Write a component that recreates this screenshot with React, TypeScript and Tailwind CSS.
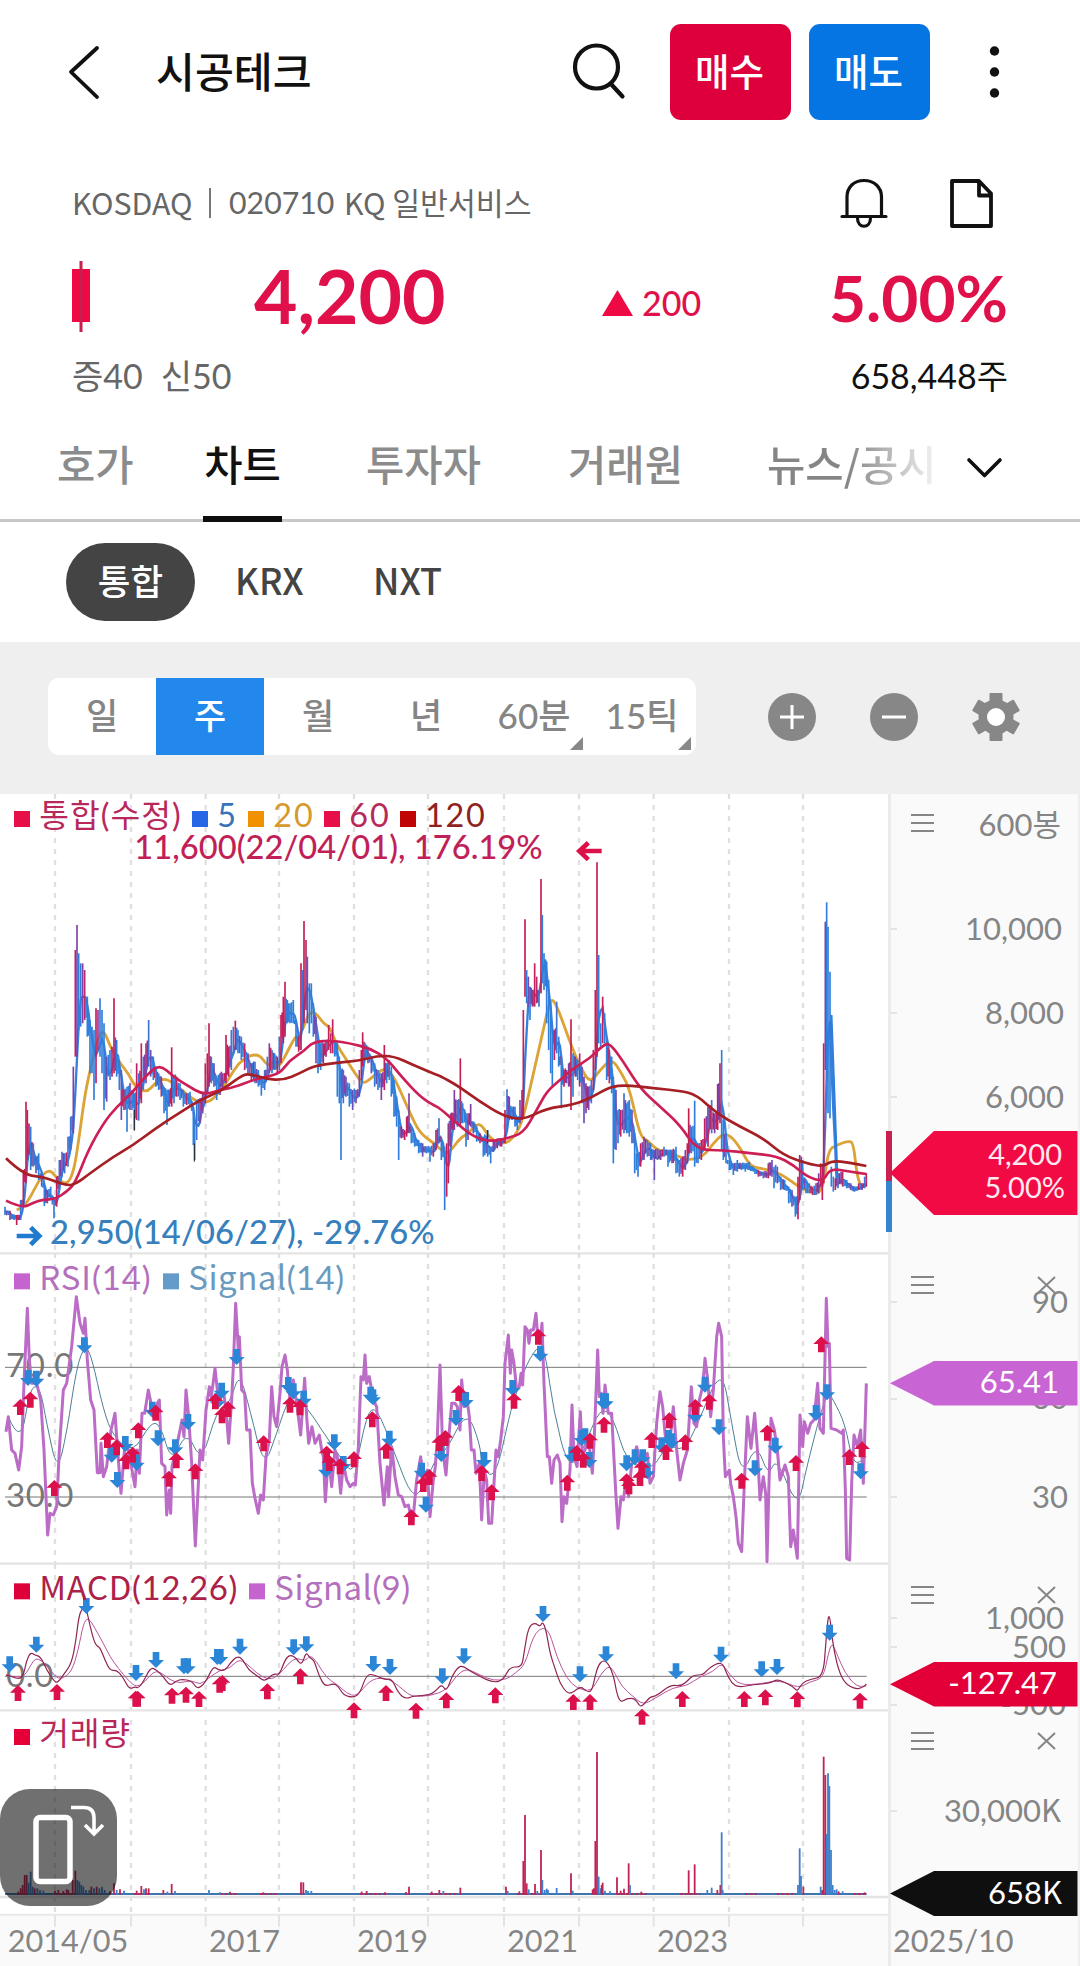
import type { ReactNode } from 'react';

type Point = [number, number];

// All chart series use a 3x grid: one unit is a third of a pixel.
const FONT_NUM = "font-[family-name:Lato,'Noto_Sans_CJK_KR',sans-serif]";
const FONT_KR = "font-[family-name:'Noto_Sans_CJK_KR',sans-serif]";

const GRID_X = [165, 393, 617, 837, 1062, 1284, 1512, 1737, 1961, 2187, 2409];
const END_X = 2600;

// x high low
const PRICE_LEFT = `15 1250 1275,30 1262 1290,50 1275 1305,62 1230 1290,70 1140 1250,78 935 1180,82 960 1110,92 1010 1140,100 1060 1130,108 1100 1150,116 1090 1170,125 1150 1190,133 1180 1248,142 1200 1240,152 1190 1225,162 1230 1285,170 1160 1250,178 1110 1200,186 1085 1160,194 1090 1150,204 1040 1130,212 980 1080,220 830 1030,226 480 800,231 405 800,236 490 720,242 520 710,248 520 700,254 540 690,262 620 740,270 690 850,276 710 850,282 720 930,288 655 880,294 660 780,300 625 800,306 660 850,312 700 960,320 800 935,330 780 870,336 770 860,342 625 850,350 750 860,358 810 900,364 840 990,372 900 960,381 890 1025,390 880 960,396 900 960,403 910 1020,410 820 990,416 850 992,424 760 940,430 800 900,438 760 880,446 690 830,452 780 860,460 800 870,468 830 890,476 850 900,484 860 920,492 890 970,501 900 1005,508 900 950,515 772 950,522 860 940,530 860 920,540 880 930,550 900 950,560 910 945,570 905 950,580 950 1065,584 990 1110,590 930 1050,600 925 1000,608 910 970,616 820 940,622 790 910,627 700 890,634 800 880,642 820 890,650 860 930,660 850 915,668 850 900,678 735 880,686 770 860,694 720 840,700 710 790,706 692 780,714 720 790,724 740 810,734 760 840,744 790 850,754 820 870,765 815 880,775 840 890,784 860 917,794 840 900,802 800 860,808 760 850,816 780 850,824 790 840,832 800 850,838 740 840,843 675 820,850 620 760,855 575 740,862 630 700,870 640 700,880 630 700,888 690 770,896 740 785,903 520 780,908 540 720,912 393 700,918 450 660,922 500 700,928 580 730,934 580 700,940 640 740,948 680 820,954 740 850,962 760 840,970 760 820,978 750 800,986 705 780,992 730 790,998 688 790,1004 750 800,1012 760 920,1018 800 940,1023 840 1110,1030 840 940,1038 860 920,1048 880 950,1058 900 960,1068 900 940,1078 840 920,1084 780 870,1088 727 830,1096 760 810,1104 770 820,1114 800 850,1124 820 890,1134 840 900,1144 850 930,1153 765 900,1160 820 880,1168 810 870,1174 830 920,1182 870 980,1190 920 1010,1196 960 1110,1204 1010 1045,1214 1020 1050,1220 980 1040,1227 910 1030,1234 1010 1060,1244 1030 1070,1256 1050 1090,1268 1060 1100,1280 1070 1090,1290 1070 1115,1300 1060 1100,1308 1020 1080,1317 985 1060,1324 1040 1110,1334 1070 1260,1340 1060 1220`;
const PRICE_RIGHT = `25 1000 1180,32 970 1070,43 900 1020,52 930 1010,61 805 1010,68 940 1000,78 970 1070,84 970 1050,92 942 1010,100 1000 1030,110 1010 1055,120 1030 1060,130 1040 1100,143 1020 1100,152 1070 1120,160 1050 1085,172 1045 1075,185 1045 1070,195 960 1060,201 898 1020,208 920 990,216 950 990,225 950 1010,232 980 1020,240 930 1000,246 900 990,250 660 980,255 388 620,260 540 640,265 560 650,270 590 690,277 600 650,284 520 650,290 560 640,297 600 650,303 267 610,307 375 580,312 490 600,320 515 700,326 570 780,332 640 850,337 720 890,343 720 810,350 635 790,356 740 830,364 800 955,372 840 890,380 840 880,386 820 890,393 688 960,399 790 920,406 800 860,413 810 870,419 790 890,426 830 940,432 860 1000,438 880 970,446 890 960,454 870 940,460 780 900,466 600 840,471 217 800,476 495 760,482 700 770,488 620 760,494 670 760,500 740 870,508 780 880,515 800 910,520 860 1120,528 900 1080,534 960 1060,542 960 1040,552 910 1030,560 940 1030,568 930 1040,576 960 1060,584 1030 1150,594 1090 1160,602 1060 1130,612 1040 1110,622 1050 1100,632 1060 1110,643 1080 1170,652 1075 1110,662 1080 1110,672 1070 1100,684 1080 1130,696 1080 1120,708 1070 1150,718 1110 1160,728 1100 1160,736 1080 1140,742 1060 1120,746 955 1090,754 1010 1090,764 932 1130,774 1060 1120,784 1050 1110,794 985 1080,804 950 1070,815 930 1030,824 970 1030,833 882 1020,840 820 1000,845 780 1080,850 990 1110,858 1040 1120,868 1110 1140,880 1120 1155,892 1110 1145,904 1120 1140,916 1120 1145,928 1115 1140,940 1130 1145,955 1140 1160,970 1145 1165,985 1120 1165,996 1110 1160,1002 1130 1195,1012 1130 1180,1022 1160 1200,1034 1170 1200,1046 1190 1240,1056 1200 1250,1066 1220 1280,1074 1160 1288,1079 1095 1230,1088 1110 1200,1098 1170 1210,1108 1180 1210,1118 1190 1215,1128 1180 1215,1136 1150 1210,1142 1120 1190,1147 1130 1230,1151 760 1180,1156 395 840,1160 337 860,1164 410 970,1170 545 985,1174 1130 1190,1180 1160 1205,1186 1165 1200,1194 1150 1195,1208 1145 1190,1220 1170 1195,1232 1180 1200,1244 1190 1205,1256 1180 1200,1266 1180 1200,1274 1160 1195,1279 1150 1190`;

const MA20_LEFT = `50,1260 75,1250 110,1185 130,1150 152,1140 170,1165 200,1185 220,1150 235,1060 255,910 275,820 295,740 312,720 330,770 360,820 385,850 405,890 440,908 465,880 490,865 515,875 545,900 575,925 600,938 630,935 660,905 690,860 715,820 750,795 780,795 800,825 835,835 860,790 885,740 905,730 925,670 945,665 970,700 990,712 1010,765 1040,810 1065,850 1088,882 1110,868 1130,850 1155,835 1175,850 1200,900 1230,970 1260,1030 1300,1058 1335,1090`;
const MA20_RIGHT = `30,1085 60,1045 85,1030 110,1003 125,1005 150,1045 190,1065 225,1040 250,985 280,850 310,720 330,628 345,635 370,700 395,770 420,830 450,880 480,840 515,805 545,850 570,900 600,1040 625,1052 650,1080 700,1090 740,1112 790,1100 820,1060 850,1030 875,1040 905,1080 930,1130 980,1138 1030,1155 1075,1190 1110,1205 1130,1215 1150,1190 1165,1080 1190,1065 1225,1053 1240,1058 1250,1150 1262,1190 1279,1185`;
const MA60_LEFT = `18,1232 65,1255 100,1238 130,1228 165,1228 200,1205 225,1180 265,1080 310,1000 350,950 400,905 435,860 478,822 520,860 560,885 610,915 660,900 700,892 760,870 800,860 840,850 870,810 910,785 940,755 1000,752 1050,760 1110,775 1160,805 1200,855 1260,920 1300,945`;
const MA60_RIGHT = `0,955 50,1000 100,1040 150,1055 200,1045 250,1030 290,960 320,905 360,870 400,835 450,805 490,765 510,760 550,815 600,895 660,950 720,1005 770,1080 850,1080 930,1090 1010,1098 1060,1125 1100,1160 1150,1175 1170,1135 1230,1145 1279,1152`;
const MA120_LEFT = `18,1105 70,1155 130,1160 200,1188 230,1180 270,1150 340,1100 400,1065 460,1020 520,980 600,930 660,905 720,860 745,850 800,868 850,870 900,850 940,828 1010,818 1080,812 1130,798 1180,798 1240,825 1300,851`;
const MA120_RIGHT = `0,858 50,885 120,935 190,978 250,990 320,955 400,945 460,920 510,890 560,885 640,895 720,902 770,915 830,970 900,1010 970,1045 1030,1095 1100,1120 1150,1130 1175,1112 1230,1118 1279,1128`;

const RSI_LEFT = `18,545 25,500 35,600 45,610 56,660 65,590 72,400 82,175 88,330 95,400 110,400 122,450 132,600 143,855 150,790 160,795 170,770 178,600 190,420 200,400 215,290 229,140 240,220 250,250 255,205 262,330 272,450 282,480 292,668 300,668 303,580 310,680 320,650 333,540 345,490 352,590 363,730 375,580 385,600 405,710 412,600 418,670 426,490 434,490 445,420 455,470 465,500 472,460 478,450 485,640 495,650 500,795 508,720 512,790 516,650 530,590 540,540 546,510 552,560 558,420 566,500 575,640 586,888 600,600 608,630 618,480 628,410 634,440 645,355 652,420 660,450 670,420 678,480 686,580 695,450 700,350 707,160 715,300 718,260 725,420 734,430 740,540 750,540 757,700 765,745 775,790 782,735 790,750 798,620 808,570 815,410 822,500 830,530 840,430 846,350 855,315 862,360 870,450 880,390 890,460 902,555 914,385 920,500 926,580 936,530 945,580 958,555 965,600 970,620 976,755 985,620 995,710 1005,600 1012,620 1022,730 1030,640 1040,690 1050,710 1060,700 1066,705 1075,590 1083,380 1090,390 1095,315 1100,400 1108,380 1120,450 1130,470 1140,640 1152,765 1162,650 1166,740 1175,590 1185,680 1195,735 1205,740 1215,770 1225,765 1238,820 1250,690 1262,620 1272,700 1282,660 1290,800 1300,690 1306,650 1312,560 1320,345 1328,600 1338,675`;
const RSI_RIGHT = `25,580 35,460 45,460 52,470 60,540 65,390 72,470 80,440 88,500 94,600 102,600 108,670 118,640 125,810 133,660 140,690 146,820 155,820 162,700 168,600 175,620 182,570 190,500 195,340 205,255 211,370 215,300 222,340 230,420 238,410 243,370 248,405 255,230 262,240 267,280 272,240 280,240 288,190 293,260 300,280 306,220 312,400 322,620 328,620 335,700 342,630 352,615 360,640 366,815 372,740 380,760 390,660 396,465 402,620 411,650 421,485 427,620 435,600 445,560 457,670 463,560 473,300 478,440 484,430 489,490 495,405 505,490 515,490 520,590 528,740 534,835 543,740 550,750 560,680 566,740 575,640 590,590 600,640 612,620 622,610 630,700 640,680 650,520 660,425 668,470 676,560 690,570 700,470 710,600 720,690 730,640 742,600 754,410 762,520 770,530 778,450 788,410 795,325 802,380 812,500 820,420 830,260 836,220 845,260 850,560 856,680 868,660 872,700 880,740 888,800 895,880 905,905 913,700 922,500 933,595 944,490 953,610 960,750 970,680 977,730 981,935 987,700 993,505 1003,540 1012,600 1020,690 1035,645 1045,680 1052,890 1060,840 1072,925 1080,495 1088,590 1093,515 1103,550 1112,520 1122,510 1133,400 1140,535 1150,550 1159,145 1164,290 1168,280 1173,535 1190,540 1205,550 1210,540 1216,720 1220,925 1229,930 1235,700 1242,555 1252,590 1262,540 1270,700 1279,400`;
const RSI_SIGNAL_LEFT = `25,500 62,590 90,410 120,410 140,520 172,668 200,550 230,350 255,285 275,320 310,480 340,560 400,610 450,520 480,520 515,640 560,540 605,640 650,480 690,460 718,365 750,480 792,655 830,550 870,430 920,470 965,540 1020,620 1063,680 1100,490 1130,470 1180,600 1240,755 1280,690 1310,620`;
const RSI_SIGNAL_RIGHT = `20,600 80,480 120,580 125,650 165,690 210,490 225,440 260,340 300,280 318,320 340,480 385,660 430,600 480,470 520,500 560,640 640,660 680,580 730,605 770,530 845,345 875,520 905,680 950,580 985,680 1010,620 1073,780 1100,650 1160,420 1180,450 1215,520 1240,650 1279,620`;

const MACD_LEFT = `18,345 35,350 60,358 72,340 80,300 92,277 105,285 122,290 140,330 160,360 172,370 190,345 215,310 228,240 235,180 243,150 258,140 268,190 285,255 300,262 315,300 330,332 350,330 368,350 388,388 405,380 415,385 430,365 452,322 470,330 490,350 510,378 530,362 545,358 575,362 592,388 615,370 640,318 655,330 675,332 690,310 712,287 730,300 745,330 775,350 795,365 820,340 838,345 855,300 868,285 885,290 905,318 918,275 930,295 942,300 958,350 975,380 1000,370 1015,378 1030,405 1060,413 1080,400 1100,342 1125,345 1155,360 1175,355 1195,400 1218,417 1240,408 1290,405 1310,390 1325,373 1340,395`;
const MACD_RIGHT = `35,350 55,320 70,318 85,330 120,350 160,368 190,360 210,320 245,322 252,280 265,200 285,188 300,200 308,185 318,210 330,280 345,325 360,370 380,398 395,400 422,378 440,395 455,395 465,350 475,315 490,300 505,310 522,350 530,400 542,428 560,415 585,415 600,440 610,435 630,410 650,408 690,375 725,378 745,360 760,345 790,345 805,325 845,303 860,340 875,370 895,382 940,374 990,370 1010,358 1030,365 1060,380 1072,395 1085,370 1110,358 1150,350 1158,240 1167,145 1178,250 1195,330 1215,370 1245,388 1270,382 1279,372`;
const MACD_SIGNAL_LEFT = `18,345 60,355 80,340 100,300 115,295 140,315 165,350 185,358 215,335 235,270 250,190 265,172 285,205 310,250 330,290 355,325 385,362 410,382 435,365 460,335 480,335 510,360 540,370 575,360 600,375 625,355 660,330 690,325 715,298 740,310 770,340 805,360 835,348 865,310 890,292 915,305 930,285 950,305 980,355 1010,372 1040,400 1070,410 1110,360 1150,352 1180,365 1210,390 1235,410 1290,408 1340,390`;
const MACD_SIGNAL_RIGHT = `50,345 80,325 120,345 160,362 200,358 225,340 255,315 280,225 310,200 330,220 350,290 380,355 410,385 455,395 480,345 505,318 520,330 545,380 580,410 610,435 650,412 700,382 740,378 780,350 820,335 845,308 870,345 900,375 960,372 1020,360 1075,385 1110,365 1150,355 1165,280 1176,248 1190,280 1215,340 1250,380 1279,378`;

const RSI_DOWN = `84,360 109,362 253,262 335,590 352,666 376,558 410,614 474,541 457,455 526,568 564,492 652,430 665,398 710,297 865,381 880,400 911,422 978,635 1003,553 1030,618 1112,410 1119,418 1168,542 1265,638 1278,740 1324,588 1368,480 1397,426 1452,606 1538,390 1621,287 1715,590 1745,540 1755,535 1768,606 1810,430 1817,430 1880,616 1905,598 1928,598 1942,640 1985,562 2005,540 2015,550 2085,470 2115,380 2157,508 2265,631 2326,563 2448,465 2481,403 2582,640`;
const RSI_UP = `61,447 91,425 163,690 322,546 350,568 378,610 398,590 415,517 467,464 507,662 529,607 586,640 646,430 666,472 684,453 791,556 870,440 900,448 980,587 988,615 1020,625 1062,604 1117,484 1159,578 1234,778 1270,678 1288,657 1318,555 1336,540 1376,405 1445,645 1475,703 1542,428 1615,236 1702,674 1730,585 1750,605 1770,548 1812,500 1880,670 1887,685 1920,660 1925,630 1955,546 2008,487 1998,582 2056,553 2086,447 2128,431 2225,668 2302,524 2388,615 2464,259 2548,597 2586,574`;
const MACD_DOWN = `29,289 109,230 259,114 408,315 468,276 552,295 563,295 652,267 661,267 720,236 881,238 919,229 1120,288 1170,297 1327,325 1392,265 1629,138 1740,319 1818,259 2028,310 2163,260 2285,304 2331,297 2489,194`;
const MACD_UP = `54,375 171,372 407,392 413,392 516,383 558,380 597,393 659,350 667,345 802,370 901,325 1062,427 1158,375 1248,428 1339,397 1486,382 1720,402 1770,402 1926,446 2047,393 2233,393 2296,388 2392,394 2580,398`;

// x top, r = rising week, b = falling week
const VOLUME = `55 995 r,62 985 r,68 975 r,74 945 r,80 945 r,86 968 b,92 935 b,98 980 b,104 985 r,112 985 b,120 990 b,130 992 b,165 992 r,175 990 r,190 993 r,200 988 r,205 990 r,218 960 r,226 932 r,232 960 b,238 965 b,244 975 b,250 980 b,258 990 b,268 990 b,274 980 r,282 985 b,290 980 r,298 985 b,306 980 b,314 990 b,330 993 r,342 970 r,350 990 b,360 988 r,372 992 b,410 992 r,424 978 r,432 988 b,438 985 r,446 985 r,490 990 r,502 995 b,515 972 r,525 993 b,627 990 b,660 997 b,690 995 r,790 997 r,903 967 r,910 967 r,918 990 b,924 993 b,934 993 b,1085 995 r,1100 993 r,1155 997 r,1218 996 r,1227 980 r,1295 995 r,1318 990 r,1330 993 b,1381 983 r,1518 980 r,1523 993 b,1558 994 r,1570 903 r,1575 765 r,1580 970 r,1586 988 b,1605 972 r,1612 993 b,1623 870 r,1627 960 b,1634 990 b,1640 986 b,1644 990 b,1670 984 b,1713 940 r,1718 992 b,1778 988 r,1782 985 r,1786 843 r,1791 576 r,1796 950 b,1802 985 b,1805 975 r,1808 968 r,1815 992 b,1830 994 b,1851 952 r,1862 992 r,1872 986 r,1886 910 r,1890 975 b,1924 995 r,2066 931 r,2084 913 r,2122 990 b,2135 983 b,2152 990 r,2161 975 r,2165 817 b,2168 990 b,2394 975 b,2399 865 b,2403 948 b,2410 980 r,2462 980 b,2467 990 r,2471 590 r,2476 645 r,2480 822 b,2484 640 b,2488 678 b,2493 870 b,2498 975 b,2504 990 b,2510 988 b,2516 994 r,2528 994 b,2594 997 r`;

const parse = (s: string, dx = 0): Point[] =>
  s.split(' ').map((p) => {
    const [x, y] = p.split(',').map(Number);
    return [x + dx, y];
  });

const join = (left: string, right: string) => [...parse(left), ...parse(right, 1320)];

const toLine = (pts: Point[]) => 'M' + pts.map((p) => p.join(' ')).join('L');

// smooth line through the midpoints of the segments
const toCurve = (pts: Point[]) => {
  let d = `M${pts[0][0]} ${pts[0][1]}`;
  for (let i = 1; i < pts.length - 1; i++) {
    const [x, y] = pts[i];
    const [nx, ny] = pts[i + 1];
    d += `Q${x} ${y} ${(x + nx) / 2} ${(y + ny) / 2}`;
  }
  const last = pts[pts.length - 1];
  return `${d}L${last[0]} ${last[1]}`;
};

const noise = (n: number) => {
  const v = Math.sin(n * 12.9898) * 43758.5453;
  return v - Math.floor(v);
};

interface Bar {
  x: number;
  high: number;
  low: number;
  color: string;
}

function buildBars(): Bar[] {
  const rows = [
    ...PRICE_LEFT.split(',').map((r) => r.split(' ').map(Number)),
    ...PRICE_RIGHT.split(',').map((r) => {
      const [x, h, l] = r.split(' ').map(Number);
      return [x + 1320, h, l];
    }),
  ];
  const bars: Bar[] = [];
  rows.forEach(([x, high, low], i) => {
    const next = rows[i + 1] ?? rows[i];
    const prev = rows[i - 1] ?? rows[i];
    const rising = next[1] + next[2] + high + low < 2 * (prev[1] + prev[2]);
    // a lone spike above both neighbours is a rising week
    const spike = prev[1] - high > 90 && next[1] - high > 40;
    const pick = (n: number) => {
      const k = noise(n);
      if (rising) return k < 0.5 ? '#c41e5c' : k < 0.8 ? '#8140a6' : '#3f72d2';
      return k < 0.7 ? '#2f7edb' : k < 0.88 ? '#6a4fb8' : '#b92a68';
    };
    bars.push({ x, high, low, color: spike ? '#c41e4f' : pick(x) });
    const gap = next[0] - x;
    const count = Math.round(gap / 4.3) - 1;
    for (let k = 1; k <= count; k++) {
      const top = Math.max(high, next[1]);
      const bottom = Math.min(low, next[2]);
      const size = Math.max(bottom - top, 14);
      const bx = x + (gap * k) / (count + 1);
      bars.push({
        x: bx,
        high: top - noise(bx + 3) * size * 0.12,
        low: top + size - noise(bx + 7) * size * 0.2,
        color: pick(bx),
      });
    }
  });
  return bars;
}

const BARS = buildBars();
const MA5: Point[] = BARS.map((b, i) => {
  const part = BARS.slice(Math.max(0, i - 3), i + 1);
  const sum = part.reduce((a, p) => a + p.high * 0.45 + p.low * 0.55, 0);
  return [b.x, sum / part.length];
});

function Mixed({ text }: { text: string }) {
  return (
    <>
      {text.split(/([A-Za-z가-힣]+)/).map((part, i) =>
        /[A-Za-z가-힣]/.test(part) ? (
          <tspan key={i} className={FONT_KR}>{part}</tspan>
        ) : (
          part
        ),
      )}
    </>
  );
}

function Grid({ top, bottom }: { top: number; bottom: number }) {
  return (
    <g stroke="#e0e0e0" strokeWidth="7" strokeDasharray="15 18">
      {GRID_X.map((x) => (
        <line key={x} x1={x} x2={x} y1={top} y2={bottom} />
      ))}
    </g>
  );
}

function Markers({ points, up }: { points: string; up?: boolean }) {
  return (
    <g fill={up ? '#dc114b' : '#2c86d8'}>
      {parse(points).map(([x, y], i) => (
        <path
          key={i}
          transform={`translate(${x} ${y})`}
          d={up ? 'M0 0L24 23H10V48H-10V23H-24Z' : 'M0 48L24 24H10V0H-10V24H-24Z'}
        />
      ))}
    </g>
  );
}

interface LegendItem {
  x: number;
  text: string;
  color: string;
  textColor: string;
  width: number;
}

function Legend({ items, y, size }: { items: LegendItem[]; y: number; size: number }) {
  return (
    <g>
      {items.map((it) => (
        <g key={it.text}>
          <rect x={it.x} y={y - 48} width="48" height="48" fill={it.color} />
          <text x={it.x + 76} y={y + 1} fontSize={size} fill={it.textColor} textLength={it.width} className={FONT_NUM}>
            <Mixed text={it.text} />
          </text>
        </g>
      ))}
    </g>
  );
}

function Pane({ top, height, className, children }: { top: number; height: number; className: string; children: ReactNode }) {
  return (
    <svg viewBox={`0 ${top} 2664 ${height}`} className={`block w-full overflow-visible ${className}`}>
      {children}
    </svg>
  );
}

function PricePane() {
  return (
    <Pane top={12} height={1377} className="h-[459px]">
      <Grid top={12} bottom={1389} />
      <line x1="0" x2="2664" y1="1390" y2="1390" stroke="#e4e4e4" strokeWidth="7" />
      <path d={toCurve(join(MA20_LEFT, MA20_RIGHT))} fill="none" stroke="#dca336" strokeWidth="8.5" />
      <path d={toLine(MA5)} fill="none" stroke="#3580de" strokeWidth="7" />
      {BARS.map((b, i) => (
        <line key={i} x1={b.x} x2={b.x} y1={b.high} y2={b.low} stroke={b.color} strokeWidth="5" />
      ))}
      <path d="M2494 675L2512 1165" stroke="#2f7edb" strokeWidth="7" />
      <path d="M403 960V1022M583 1060V1115M1463 1020V1060" stroke="#222" strokeWidth="3" />
      <path d={toCurve(join(MA60_LEFT, MA60_RIGHT))} fill="none" stroke="#cd1f56" strokeWidth="8" />
      <path d={toCurve(join(MA120_LEFT, MA120_RIGHT))} fill="none" stroke="#a51f24" strokeWidth="8" />
      <Legend
        y={111}
        size={97}
        items={[
          { x: 42, text: '통합(수정)', color: '#e60f47', textColor: '#b8285a', width: 424 },
          { x: 576, text: '5', color: '#2767e6', textColor: '#3673b8', width: 56 },
          { x: 744, text: '20', color: '#f29100', textColor: '#d69a2c', width: 118 },
          { x: 972, text: '60', color: '#e60f47', textColor: '#b8285a', width: 118 },
          { x: 1200, text: '120', color: '#c00505', textColor: '#8f2220', width: 178 },
        ]}
      />
      <g className={`font-medium ${FONT_NUM}`} fontSize="98">
        <text x="403" y="207" fill="#c11f58" textLength="1225">11,600(22/04/01), 176.19%</text>
        <text x="150" y="1361" fill="#3580bd" textLength="1154">2,950(14/06/27), -29.76%</text>
      </g>
      <path d="M1805 183H1738M1765 158L1738 183L1765 209" fill="none" stroke="#dc1149" strokeWidth="14" />
      <path d="M50 1338H117M92 1312L118 1338L92 1364" fill="none" stroke="#207bd0" strokeWidth="14" />
    </Pane>
  );
}

function RsiPane() {
  return (
    <Pane top={9} height={933} className="h-[311px]">
      <Grid top={9} bottom={942} />
      <line x1="0" x2="2664" y1="941" y2="941" stroke="#e4e4e4" strokeWidth="7" />
      <g fontSize="99" fill="#777" className={FONT_NUM}>
        <text x="18" y="382" textLength="202">70.0</text>
        <text x="18" y="772" textLength="202">30.0</text>
      </g>
      <path d={`M15 352H${END_X}M15 741H${END_X}`} stroke="#777" strokeWidth="3" />
      <path d={toCurve(join(RSI_SIGNAL_LEFT, RSI_SIGNAL_RIGHT))} fill="none" stroke="#4d8097" strokeWidth="3" />
      <path d={toLine(join(RSI_LEFT, RSI_RIGHT))} fill="none" stroke="#bb6cc6" strokeWidth="9" strokeLinejoin="round" />
      <Markers points={RSI_DOWN} />
      <Markers points={RSI_UP} up />
      <Legend
        y={118}
        size={99}
        items={[
          { x: 42, text: 'RSI(14)', color: '#c564cf', textColor: '#b46fbd', width: 334 },
          { x: 489, text: 'Signal(14)', color: '#659bcb', textColor: '#6a9bbf', width: 467 },
        ]}
      />
    </Pane>
  );
}

function MacdPane() {
  return (
    <Pane top={12} height={438} className="h-[146px]">
      <Grid top={12} bottom={450} />
      <line x1="0" x2="2664" y1="451" y2="451" stroke="#e4e4e4" strokeWidth="7" />
      <text x="18" y="380" fontSize="99" fill="#777" textLength="142" className={FONT_NUM}>0.0</text>
      <path d={`M15 349H${END_X}`} stroke="#777" strokeWidth="3" />
      <path d={toCurve(join(MACD_SIGNAL_LEFT, MACD_SIGNAL_RIGHT))} fill="none" stroke="#b8559f" strokeWidth="3" />
      <path d={toCurve(join(MACD_LEFT, MACD_RIGHT))} fill="none" stroke="#8f2450" strokeWidth="3.6" />
      <Markers points={MACD_DOWN} />
      <Markers points={MACD_UP} up />
      <Legend
        y={118}
        size={99}
        items={[
          { x: 42, text: 'MACD(12,26)', color: '#de0038', textColor: '#ac2148', width: 594 },
          { x: 747, text: 'Signal(9)', color: '#c564cf', textColor: '#b46fbd', width: 407 },
        ]}
      />
    </Pane>
  );
}

function VolumePane() {
  return (
    <Pane top={450} height={615} className="h-[205px]">
      <Grid top={480} bottom={1065} />
      <line x1="0" x2="2664" y1="1011" y2="1011" stroke="#e4e4e4" strokeWidth="7" />
      <line x1="0" x2="2664" y1="1064" y2="1064" stroke="#e8e8e8" strokeWidth="6" />
      <path d="M15 1002H2600" stroke="#3e75ae" strokeWidth="6" />
      <path d="M165 1002H220M400 1002H450M660 1002H710M780 1002H830M1080 1002H1165M1290 1002H1370M1550 1002H1620M1850 1002H1940M2040 1002H2100M2235 1002H2270M2330 1002H2380M2560 1002H2600" stroke="#a8305f" strokeWidth="6" strokeDasharray="9 5" />
      {VOLUME.split(',').map((row) => {
        const [x, top, kind] = row.split(' ');
        return <path key={x} d={`M${x} ${top}V1004`} stroke={kind === 'r' ? '#c02354' : '#3c7fcb'} strokeWidth="5.4" />;
      })}
      <Legend y={555} size={97} items={[{ x: 42, text: '거래량', color: '#e60038', textColor: '#b8285a', width: 272 }]} />
    </Pane>
  );
}

function TimeAxis() {
  const labels: [number, string][] = [[23, '2014/05'], [627, '2017'], [1071, '2019'], [1521, '2021'], [1971, '2023']];
  return (
    <svg viewBox="0 1065 2664 153" className="block h-[51px] w-full bg-[#fafafa]">
      <path d={GRID_X.map((x) => `M${x} 1065V1100`).join('')} stroke="#e4e4e4" strokeWidth="6" />
      <g fontSize="92" fill="#858585" className={FONT_NUM}>
        {labels.map(([x, t]) => (
          <text key={t} x={x} y="1176">{t}</text>
        ))}
      </g>
    </svg>
  );
}

function Tag({ top, height, color }: { top: number; height: number; color: string }) {
  return <path d={`M890 ${top + height / 2}L934 ${top}H1077.5V${top + height}H934Z`} fill={color} />;
}

// value scale on the right, in page pixels
function ValueAxis() {
  const scale: [number, number, string][] = [
    [1061, 929, '10,000'],
    [1063, 1013, '8,000'],
    [1063, 1097, '6,000'],
    [1067, 1302, '90'],
    [1067, 1398, '60'],
    [1067, 1497, '30'],
    [1063, 1618, '1,000'],
    [1065, 1647, '500'],
    [1065, 1703.5, '-500'],
  ];
  return (
    <svg viewBox="888 794 192 1172" className={`block h-[1172px] w-[192px] shrink-0 overflow-visible bg-[#fafafa] ${FONT_NUM}`}>
      <path d="M889.5 794V1966" stroke="#ebebeb" strokeWidth="3" />
      <path d="M1079 794V1966" stroke="#efefef" strokeWidth="2" />
      <path d="M891 929H897M891 1013H897M891 1097H897M891 1302H897M891 1399H897M891 1497H897M891 1618H897M891 1647H897M891 1705H897M891 1811H897" stroke="#e4e4e4" strokeWidth="2" />
      {[823, 1285, 1595, 1741].map((y) => (
        <path key={y} d={`M911 ${y - 8}H934M911 ${y}H934M911 ${y + 8}H934`} stroke="#858585" strokeWidth="2" />
      ))}
      {[1285, 1595, 1741].map((y) => (
        <path key={y} d={`M1038 ${y - 8}L1055 ${y + 8}M1055 ${y - 8}L1038 ${y + 8}`} stroke="#858585" strokeWidth="2" />
      ))}
      <g fontSize="31" fill="#858585" textAnchor="end">
        {scale.map(([x, y, t]) => (
          <text key={t} x={x + 1} y={y + 11}>{t}</text>
        ))}
        <text x="1061" y="836">600봉</text>
        <text x="1061" y="1822"><Mixed text="30,000K" /></text>
      </g>
      <text x="893" y="1952" fontSize="30.7" fill="#858585">2025/10</text>
      <rect x="886" y="1131" width="6" height="50" fill="#c9204f" />
      <rect x="886" y="1181" width="6" height="51" fill="#3585cf" />
      <Tag top={1131} height={84} color="#f20a45" />
      <Tag top={1361} height={44.5} color="#c964d4" />
      <Tag top={1662} height={44.5} color="#e30039" />
      <Tag top={1871} height={45} color="#0f0f0f" />
      <g fontSize="29" fill="#ffe9f0" textAnchor="end">
        <text x="1062" y="1165">4,200</text>
        <text x="1065" y="1198">5.00%</text>
      </g>
      <g fontSize="31" fill="#fff" textAnchor="end">
        <text x="1059" y="1393">65.41</text>
        <text x="1057" y="1694">-127.47</text>
        <text x="1062" y="1904"><Mixed text="658K" /></text>
      </g>
    </svg>
  );
}

function RotateButton() {
  return (
    <button className="absolute left-0 top-[995px] h-[117px] w-[117px] rounded-[30px] bg-[#111]/60">
      <svg viewBox="0 0 117 117" className="h-full w-full" fill="none" stroke="#fff">
        <rect x="36" y="28.5" width="34" height="64" rx="4" strokeWidth="5.5" />
        <path d="M71 18.5H84Q94 18.5 94 29V44M85 36L94 45L103 36" strokeWidth="3.6" />
      </svg>
    </button>
  );
}

function Header() {
  return (
    <header className="flex h-[144px] items-center pl-[66px]">
      <svg viewBox="0 0 36 56" className="h-[56px] w-[36px]" fill="none" stroke="#111" strokeWidth="3.8" strokeLinecap="round" strokeLinejoin="round">
        <path d="M31 4L5 28L31 53" />
      </svg>
      <h1 className="ml-[54px] w-[412px] pb-[4px] text-[42.3px] font-medium leading-none text-[#111]">시공테크</h1>
      <svg viewBox="0 0 60 60" className="h-[60px] w-[60px]" fill="none" stroke="#111" strokeWidth="4.2" strokeLinecap="round">
        <circle cx="28.5" cy="25" r="21.5" />
        <path d="M43 42L54.500 54.500" />
      </svg>
      <button className="ml-[42px] h-[96px] w-[121px] rounded-[11px] bg-[#de003d] pb-[4px] pr-[2px] text-[37.5px] font-medium text-white">매수</button>
      <button className="ml-[18px] h-[96px] w-[121px] rounded-[11px] bg-[#0575e3] pb-[4px] pr-[2px] text-[37.5px] font-medium text-white">매도</button>
      <svg viewBox="0 0 12 56" className="ml-[58px] h-[56px] w-[12px]" fill="#111">
        <circle cx="6.500" cy="7" r="4.700" />
        <circle cx="6.500" cy="28" r="4.700" />
        <circle cx="6.500" cy="49" r="4.700" />
      </svg>
    </header>
  );
}

function Quote() {
  return (
    <section>
      <div className="flex h-[100px] items-center pl-[72px] pt-[19px] text-[30.3px] leading-none text-[#666]">
        <span className="w-[119px] pb-[2px]">KOSDAQ</span>
        <span className="mx-[18px] mb-[2px] h-[30px] w-[2px] bg-[#777]" />
        <span className={`w-[107px] pb-[2px] ${FONT_NUM}`}>020710</span>
        <span className="ml-[8px] w-[500px] pb-[2px]">KQ 일반서비스</span>
        <svg viewBox="0 0 50 54" className="-ml-[5px] h-[54px] w-[50px]" fill="none" stroke="#111" strokeWidth="3.2" strokeLinecap="round">
          <path d="M8 39V20C8 10 15 3.500 25 3.500S42.500 10 42.500 20V39M3 39.500H47M18.500 41C18.500 52 31.500 52 31.500 41" />
        </svg>
        <svg viewBox="0 0 50 54" className="ml-[57px] h-[54px] w-[50px]" fill="none" stroke="#111" strokeWidth="3.8" strokeLinejoin="round">
          <path d="M6 4H33L45 16.500V49H6ZM33 4V18.500H45" />
        </svg>
      </div>
      <div className={`flex h-[104px] items-center pl-[72px] text-[#e0114a] ${FONT_NUM}`}>
        <svg viewBox="0 0 18 71" className="h-[71px] w-[18px]">
          <rect x="0" y="8" width="18" height="53" fill="#ee0844" />
          <rect x="7.500" y="0" width="3" height="71" fill="#c5204e" />
        </svg>
        <span className="ml-[164px] w-[348px] pb-[2px] text-[75px] font-bold leading-none">4,200</span>
        <svg viewBox="0 0 31 26" className="mt-[14px] h-[26px] w-[31px]">
          <path d="M15.500 0L31 26H0Z" fill="#ee0844" />
        </svg>
        <span className="ml-[9px] mt-[14px] w-[187px] text-[34px] font-medium leading-none">200</span>
        <span className="mt-[4px] text-[64px] font-bold leading-none">5.00%</span>
      </div>
      <div className={`flex h-[62px] items-center justify-between pl-[72px] pr-[72px] pb-[6px] text-[34px] leading-none ${FONT_NUM}`}>
        <span className="flex gap-[18px] text-[#666]">
          <span>증40</span>
          <span>신50</span>
        </span>
        <span className="text-[#111]">658,448주</span>
      </div>
    </section>
  );
}

function Tabs() {
  return (
    <nav className="flex h-[112px] border-b-[3px] border-[#c8c8c8] pl-[57px] text-[41.7px] font-medium leading-[107px] text-[#8b8b8b]">
      <span className="h-[112px] w-[146px]">호가</span>
      <span className="h-[112px] w-[79px] border-b-[6px] border-[#0d0d0d] text-center text-[#111]">차트</span>
      <span className="ml-[84px] w-[202px]">투자자</span>
      <span className="w-[199px]">거래원</span>
      <span className="w-[177px] whitespace-nowrap bg-gradient-to-r from-[#858585] from-45% to-[#f2f2f2] to-95% bg-clip-text text-transparent">뉴스/공시</span>
      <svg viewBox="0 0 40 24" className="ml-[20px] mt-[46px] h-[24px] w-[40px]" fill="none" stroke="#111" strokeWidth="3.600" strokeLinecap="round" strokeLinejoin="round">
        <path d="M5 4L20.500 19.500L36 4" />
      </svg>
    </nav>
  );
}

function Markets() {
  return (
    <div className="flex h-[120px] items-center pl-[66px] text-[36px] font-medium leading-none text-[#444]">
      <span className="flex h-[78px] w-[129px] items-center justify-center rounded-full bg-[#444] pb-[5px] text-[35.500px] text-white">통합</span>
      <span className="ml-[40px] w-[138px] pb-[6px]">KRX</span>
      <span className="pb-[6px]">NXT</span>
    </div>
  );
}

function Toolbar() {
  const periods = ['일', '주', '월', '년', '60분', '15틱'];
  return (
    <div className="flex h-[152px] items-center bg-[#efefef] pb-[3px] pl-[48px]">
      <div className={`flex h-[77px] w-[648px] overflow-hidden rounded-[11px] bg-white text-[35px] font-medium text-[#858585] ${FONT_NUM}`}>
        {periods.map((p, i) => (
          <button key={p} className={`relative w-[108px] pb-[3px] ${p === '주' ? 'bg-[#2388ec] text-white' : ''}`}>
            {p}
            {i > 3 && (
              <svg viewBox="0 0 13 13" className="absolute bottom-[5px] right-[5px] h-[13px] w-[13px]">
                <path d="M13 0V13H0Z" fill="#888" />
              </svg>
            )}
          </button>
        ))}
      </div>
      <svg viewBox="0 0 48 48" className="ml-[72px] h-[48px] w-[48px]" stroke="#fff" strokeWidth="3">
        <circle cx="24" cy="24" r="24" fill="#878787" stroke="none" />
        <path d="M12 24H36M24 12V36" />
      </svg>
      <svg viewBox="0 0 48 48" className="ml-[54px] h-[48px] w-[48px]" stroke="#fff" strokeWidth="3">
        <circle cx="24" cy="24" r="24" fill="#878787" stroke="none" />
        <path d="M12 24H36" />
      </svg>
      <svg viewBox="-24 -24 48 48" className="ml-[54px] h-[48px] w-[48px]" fill="#878787">
        <circle r="17.500" />
        {[0, 60, 120, 180, 240, 300].map((a) => (
          <rect key={a} x="-6.500" y="-24" width="13" height="12" rx="1" transform={`rotate(${a})`} />
        ))}
        <circle r="9" fill="#fff" />
      </svg>
    </div>
  );
}

export default function App() {
  return (
    <div className={`h-[1966px] w-[1080px] overflow-hidden bg-white ${FONT_KR}`}>
      <Header />
      <Quote />
      <Tabs />
      <Markets />
      <Toolbar />
      <main className="relative flex">
        <div className="w-[888px]">
          <PricePane />
          <RsiPane />
          <MacdPane />
          <VolumePane />
          <TimeAxis />
        </div>
        <ValueAxis />
        <RotateButton />
      </main>
    </div>
  );
}
